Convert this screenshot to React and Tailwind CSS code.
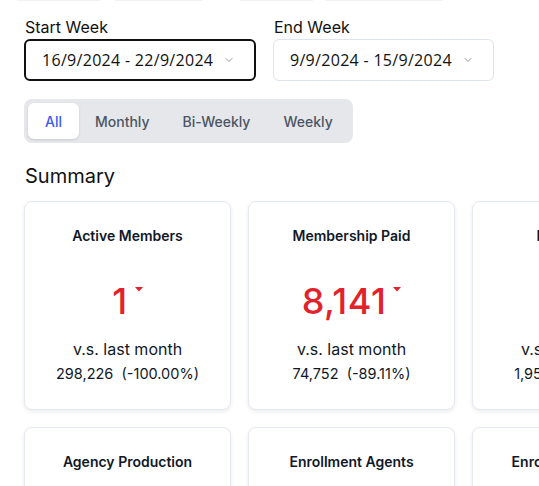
import { ChevronDown } from 'lucide-react'

const stats = [
  { title: 'Active Members', value: '1', prev: '298,226', pct: '(-100.00%)' },
  { title: 'Membership Paid', value: '8,141', prev: '74,752', pct: '(-89.11%)' },
  { title: 'Fee Income', value: '0', prev: '1,954', pct: '(-100.00%)' },
]

const stats2 = ['Agency Production', 'Enrollment Agents', 'Enrollment Agency']

function Caret() {
  return (
    <svg width="8" height="5" viewBox="0 0 8 5" className="mt-[8px] ml-[7px] shrink-0">
      <path d="M0 0 L8 0 L4 4.5 Z" fill="#e3212b" />
    </svg>
  )
}

function StatCard({ s }) {
  return (
    <div className="w-[207px] h-[209px] shrink-0 rounded-lg border border-[#e4e9f2] bg-white shadow-[0_2px_4px_rgba(15,23,42,0.08)] flex flex-col items-center pt-[24px]">
      <div className="text-[14px] leading-[20px] font-semibold text-[#111827]">{s.title}</div>
      <div className="flex items-start mt-[33px] text-[#e3212b]">
        <span className="text-[36px] leading-[44px] font-medium tracking-[0.5px]">{s.value}</span>
        <Caret />
      </div>
      <div className="mt-[14px] text-[16px] leading-[24px] text-[#111827]">v.s. last month</div>
      <div className="mt-[2px] text-[14.5px] leading-[22px] text-[#111827] whitespace-pre">
        {s.prev}{'  '}{s.pct}
      </div>
    </div>
  )
}

function Dropdown({ value, active, width }) {
  return (
    <div
      className={
        'h-[42px] rounded-md bg-white flex items-center justify-between pl-[16px] pr-[19px] ' +
        (active ? 'border-2 border-[#111111]' : 'border border-[#dde3ef]')
      }
      style={{ width }}
    >
      <span className="text-[16px] text-[#111111] font-['Open_Sans',sans-serif] tracking-[0.3px]">{value}</span>
      <ChevronDown size={12} className="text-[#6b7280]" strokeWidth={1.5} />
    </div>
  )
}

export default function App() {
  return (
    <div className="h-[486px] w-[539px] overflow-hidden bg-white font-['Inter',sans-serif]">
      <div className="flex h-[2px] gap-0">
        <div className="ml-[17px] w-[83px] h-px bg-[#f2f2f2]" />
        <div className="ml-[15px] w-[87px] h-px bg-[#f2f2f2]" />
        <div className="ml-[38px] w-[73px] h-px bg-[#f2f2f2]" />
        <div className="ml-[12px] w-[118px] h-px bg-[#f2f2f2]" />
      </div>
      <div className="px-[24px] pt-[13px]">
        <div className="flex gap-[17px]">
          <div>
            <div className="text-[16px] leading-[24px] text-[#111111] pl-px">Start Week</div>
            <Dropdown value="16/9/2024 - 22/9/2024" active width="232px" />
          </div>
          <div>
            <div className="text-[16px] leading-[24px] text-[#111111] pl-px">End Week</div>
            <Dropdown value="9/9/2024 - 15/9/2024" width="221px" />
          </div>
        </div>

        <div className="mt-[18px] inline-flex p-[4px] rounded-lg bg-[#e5e7eb]">
          <div className="h-[36px] px-[17px] flex items-center rounded-md bg-white shadow-sm text-[14px] font-medium text-[#3b5bf0]">All</div>
          <div className="h-[36px] px-[16px] flex items-center text-[14px] font-medium text-[#4b5563]">Monthly</div>
          <div className="h-[36px] px-[17px] flex items-center text-[14px] font-medium text-[#4b5563]">Bi-Weekly</div>
          <div className="h-[36px] px-[16px] flex items-center text-[14px] font-medium text-[#4b5563]">Weekly</div>
        </div>

        <div className="mt-[19px] text-[20px] leading-[28px] text-[#111111] pl-px">Summary</div>

        <div className="mt-[11px] flex gap-[17px]">
          {stats.map((s) => (
            <StatCard key={s.title} s={s} />
          ))}
        </div>

        <div className="mt-[17px] flex gap-[17px]">
          {stats2.map((t) => (
            <div key={t} className="w-[207px] h-[120px] shrink-0 rounded-lg border border-[#e4e9f2] bg-white shadow-[0_2px_4px_rgba(15,23,42,0.08)] flex flex-col items-center pt-[24px]">
              <div className="text-[14px] leading-[20px] font-semibold text-[#111827]">{t}</div>
            </div>
          ))}
        </div>
      </div>
    </div>
  )
}
